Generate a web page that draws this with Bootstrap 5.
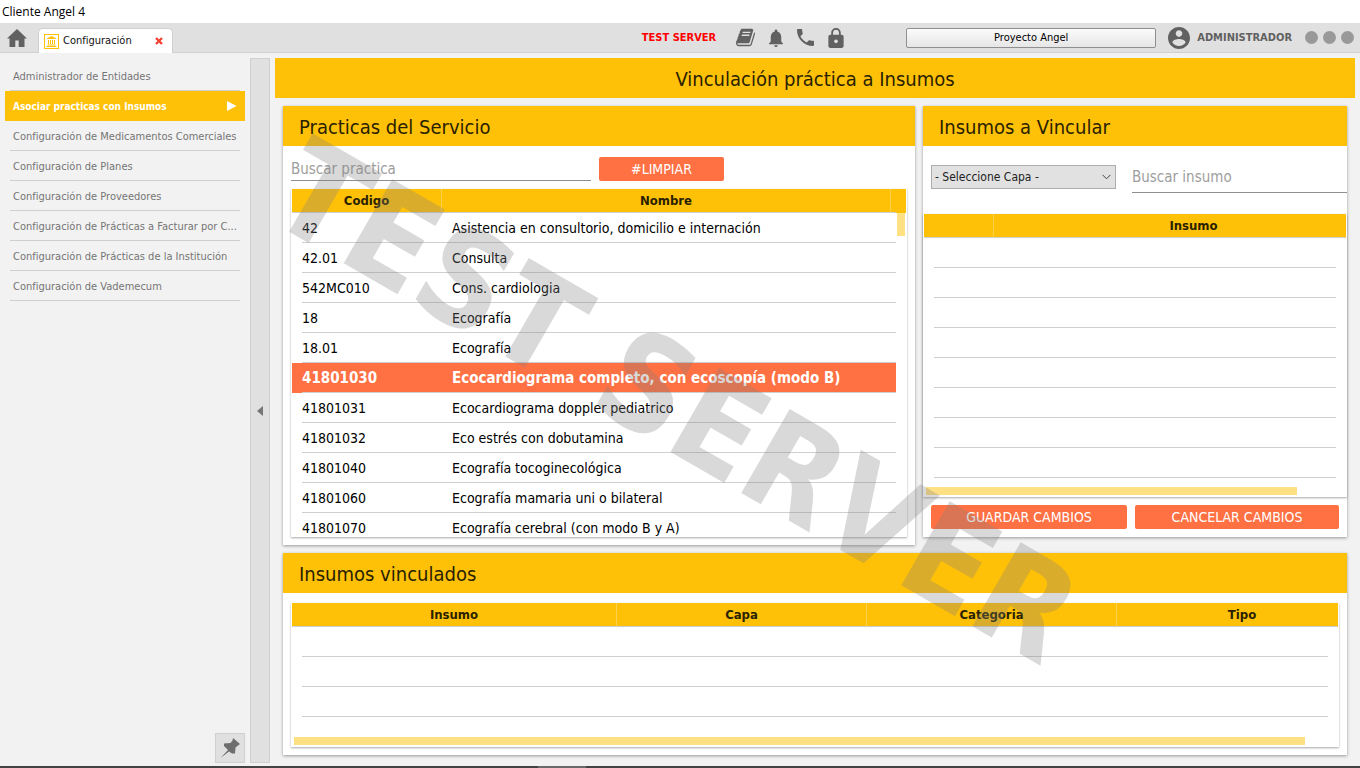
<!DOCTYPE html>
<html lang="es">
<head>
<meta charset="utf-8">
<meta name="viewport" content="width=device-width, initial-scale=1">
<title>Cliente Angel 4</title>
<link rel="stylesheet" href="https://cdn.jsdelivr.net/npm/bootstrap@5.3.0/dist/css/bootstrap.min.css">
<style>
:root{--ambar:#ffc107;--ambar-claro:#ffe082;--naranja:#ff7043;--fondo:#f2f2f2;--barra:#e0e0e0;--linea:#cfcfcf;--icono:#616161;}
body{font-family:"DejaVu Sans Condensed","DejaVu Sans",Tahoma,sans-serif;font-size:14px;line-height:20px;color:#000;background:var(--fondo);}
.app{min-height:100vh;}
.titulo-ventana{height:23px;padding-left:2px;font-family:"Open Sans","Segoe UI",sans-serif;font-size:12px;line-height:23px;}
.barra{height:30px;background:var(--barra);border-bottom:1px solid #d0d0d0;padding:0 6px 0 7px;font-size:11px;color:var(--icono);}
.barra svg{fill:currentColor;display:block;}
.icono-btn{border:0;padding:0;background:none;color:inherit;}
.herramientas{gap:14px;margin:0 62px 0 20px;}
.pestana{height:25px;width:135px;margin:5px 0 -1px 11px;padding:0 9px 0 5px;background:#fff;border:1px solid #d0d0d0;border-bottom:0;border-radius:5px 5px 0 0;color:#111;}
.aviso{color:#f00;}
.proyecto{width:250px;height:20px;border:1px solid #8f8f8f;border-radius:2px;background:linear-gradient(#fbfbfb,#e6e6e6);font-size:11px;line-height:18px;padding:0;color:#000;}
.usuario{gap:7px;margin:0 13px 0 12px;}
.puntos{gap:5px;}
.punto{width:13px;height:13px;border-radius:50%;background:#999;border:0;padding:0;}
.cuerpo{padding:5px 5px 3px;gap:5px;min-height:0;}
.lateral{width:240px;padding-top:3px;}
.lateral a{height:30px;line-height:31px;padding:0 8px;white-space:nowrap;font-size:11px;color:#757575;text-decoration:none;background:linear-gradient(var(--linea),var(--linea)) center bottom/calc(100% - 10px) 1px no-repeat;}
.lateral a.activo{background:var(--ambar);color:#fff;font-size:10px;font-weight:700;}
.fijar{width:30px;height:30px;padding:0;border:1px solid #d0d0d0;background:var(--barra);}
.divisor{width:20px;background:var(--barra);border:1px solid #d0d0d0;}
.principal{min-width:0;}
.cabecera{height:40px;line-height:42px;background:var(--ambar);color:#2a2100;font-size:20px;font-weight:400;margin:0;}
.zona{padding:8px;gap:8px;}
.paneles{display:grid;grid-template-columns:minmax(0,1fr) 424px;gap:8px;}
.panel{background:#fff;box-shadow:0 1px 3px rgba(0,0,0,.38);}
.panel .cabecera{padding:0 16px;}
.panel-datos{padding:10px 8px 8px;}
.marco{background:#fff;box-shadow:0 1px 2px rgba(0,0,0,.35);padding:0 1px 1px;}
.busqueda{padding-top:1px;}
.buscar{border:0;border-bottom:1px solid #8f8f8f;background:none;padding:0;height:24px;outline:0;font-size:15px;width:300px;}
.buscar::placeholder{color:#9e9e9e;opacity:1;}
.accion{height:24px;line-height:24px;padding:0;border:0;border-radius:2px;background:var(--naranja);color:#fff;font-size:14px;}
.limpiar{width:125px;}
.cancelar{width:204px;}
.capa{width:185px;height:24px;border:1px solid #adadad;border-radius:0;background:#e1e1e1 url("data:image/svg+xml,%3Csvg xmlns='http://www.w3.org/2000/svg' width='9' height='6'%3E%3Cpath d='M.5 .8l4 4 4-4' fill='none' stroke='%23444'/%3E%3C/svg%3E") right 4px center no-repeat;appearance:none;padding:0 3px;font-size:12px;color:#222;}
.filtros{padding:19px 0 21px 8px;}
.filtros .buscar{height:28px;padding-bottom:4px;min-width:0;width:auto;}
.grilla{width:100%;table-layout:fixed;border-collapse:separate;border-spacing:0;}
.grilla th{height:24px;line-height:24px;padding:0;background:var(--ambar);border-bottom:1px solid var(--linea);border-right:1px solid #ffd24d;text-align:center;font-size:13px;color:#2a2100;}
.grilla thead tr{height:24px;}
.grilla th{line-height:23px;}
.grilla th:last-child{border-right-color:var(--ambar);}
.grilla tbody tr{background:linear-gradient(var(--linea),var(--linea)) center bottom/calc(100% - 20px) 1px no-repeat;}
.grilla td{height:30px;line-height:30px;padding:0 10px;white-space:nowrap;overflow:hidden;}
.practicas tbody tr{background-position:right bottom;background-size:calc(100% - 10px) 1px;}
.practicas .elegida{background-color:var(--naranja);color:#fff;font-weight:700;font-size:15px;}
.lista{height:347px;overflow:hidden;}
.riel{width:10px;}
.riel-tope{height:24px;background:var(--ambar);}
.riel-pulgar{width:8px;height:23px;margin-left:1px;background:var(--ambar-claro);}
.pulgar{height:8px;margin:0 0 1px 2px;background:var(--ambar-claro);}
.insumos th:last-child{padding-left:48px;}
.insumos + .pulgar{width:88%;margin-top:9px;}
.vinculados th:last-child{padding-left:30px;}
.vinculados + .pulgar{width:1011px;max-width:97%;margin-top:20px;}
.borde-inferior{height:2px;background:linear-gradient(90deg,transparent 538px,#6a6a6a 538px,#6a6a6a 586px,transparent 586px),#434343;}
.marca{position:absolute;inset:36px 8px 0 0;overflow:hidden;pointer-events:none;}
.marca span{font-size:133px;line-height:1;font-weight:700;color:rgba(128,128,128,.3);transform:rotate(30deg);white-space:nowrap;}
</style>
</head>
<body>
<div class="app d-flex flex-column position-relative">
  <div class="titulo-ventana bg-white">Cliente Angel 4</div>

  <header class="barra d-flex align-items-center">
    <button class="icono-btn" aria-label="Inicio"><svg width="20" height="18" viewBox="0 0 20 18"><path d="M10 0 0 9.500h2.500V18h5.800v-6.500h3.400V18h5.800V9.500H20z"/></svg></button>
    <div class="pestana d-flex align-items-center align-self-start">
      <svg width="15" height="15" viewBox="0 0 15 15" class="flex-shrink-0 text-warning"><path d="M0 0h15v15H0zM1 1v13h13V1z" fill-rule="evenodd"/><path d="M7.500 2 3 4.200V5h9v-.8zM4 6h1v4H4zM6 6h1v4H6zM8 6h1v4H8zM10 6h1v4h-1zM3.500 10.500h8v1h-8zM2.500 12h10v1h-10z"/></svg>
      <span class="ms-1">Configuración</span>
      <button class="icono-btn ms-auto" aria-label="Cerrar"><svg width="8" height="8" viewBox="0 0 8 8"><path d="M1 1l6 6M7 1L1 7" stroke="#f44336" stroke-width="2.400"/></svg></button>
    </div>
    <strong class="aviso ms-auto">TEST SERVER</strong>
    <div class="herramientas d-flex align-items-center">
      <button class="icono-btn" aria-label="Manual"><svg width="19" height="19" viewBox="64 64 1664 1664"><path d="M1703 478q40 57 18 129l-275 906q-19 64-76.500 107.500t-122.500 43.500h-923q-77 0-148.500-53.500t-99.500-131.500q-24-67-2-127 0-4 3-27t4-37q1-8-3-21.500t-3-19.500q2-11 8-21t16.500-23.500 16.500-23.500q23-38 45-91.500t30-91.500q3-10 .5-30t-.5-28q3-11 17-28t17-23q21-36 42-92t25-90q1-9-2.500-32t.5-28q4-13 22-30.500t22-22.500q19-26 42.500-84.500t27.500-96.500q1-8-3-25.500t-2-26.500q2-8 9-18t18-23 17-21q8-12 16.500-30.500t15-35 16-36 19.500-32 26.500-23.500 36-11.500 47.500 5.500l-1 3q38-9 51-9h761q74 0 114 56t18 130l-274 906q-36 119-71.500 153.500t-128.500 34.500h-869q-27 0-38 15-11 16-1 43 24 70 144 70h923q29 0 56-15.500t35-41.500l300-987q7-22 5-57 38 15 59 43zm-1064 2q-4 13 2 22.500t20 9.500h608q13 0 25.500-9.500t16.500-22.500l21-64q4-13-2-22.500t-20-9.500h-608q-13 0-25.500 9.500t-16.500 22.500zm-83 256q-4 13 2 22.500t20 9.500h608q13 0 25.500-9.500t16.500-22.500l21-64q4-13-2-22.500t-20-9.500h-608q-13 0-25.500 9.500t-16.500 22.500z"/></svg></button>
      <button class="icono-btn" aria-label="Notificaciones"><svg width="14" height="18" viewBox="4 2 16 20" preserveAspectRatio="none"><path d="M12 22c1.100 0 2-.9 2-2h-4c0 1.100.89 2 2 2zm6-6v-5c0-3.070-1.640-5.640-4.500-6.320V4c0-.83-.67-1.500-1.500-1.500s-1.500.67-1.500 1.500v.68C7.630 5.360 6 7.920 6 11v5l-2 2v1h16v-1z"/></svg></button>
      <button class="icono-btn" aria-label="Llamadas"><svg width="17" height="17" viewBox="3 3 18 18"><path d="M6.620 10.790c1.440 2.830 3.760 5.140 6.590 6.590l2.200-2.200c.27-.27.67-.36 1.020-.24 1.120.37 2.330.57 3.570.57.55 0 1 .45 1 1V20c0 .55-.45 1-1 1-9.390 0-17-7.610-17-17 0-.55.45-1 1-1h3.500c.55 0 1 .45 1 1 0 1.250.2 2.450.57 3.570.11.35.03.74-.25 1.020z"/></svg></button>
      <button class="icono-btn" aria-label="Bloquear"><svg width="16" height="20" viewBox="4 1 16 21"><path d="M18 8h-1V6c0-2.760-2.240-5-5-5S7 3.240 7 6v2H6c-1.100 0-2 .9-2 2v10c0 1.100.9 2 2 2h12c1.100 0 2-.9 2-2V10c0-1.100-.9-2-2-2zm-6 9c-1.100 0-2-.9-2-2s.9-2 2-2 2 .9 2 2-.9 2-2 2zm3.100-9H8.900V6c0-1.710 1.390-3.100 3.100-3.100s3.100 1.390 3.100 3.100z"/></svg></button>
    </div>
    <button class="proyecto">Proyecto Angel</button>
    <div class="usuario d-flex align-items-center">
      <svg class="flex-shrink-0" width="22" height="22" viewBox="2 2 20 20"><path d="M12 2C6.480 2 2 6.480 2 12s4.480 10 10 10 10-4.480 10-10S17.520 2 12 2zm0 3c1.660 0 3 1.340 3 3s-1.340 3-3 3-3-1.340-3-3 1.340-3 3-3zm0 14.200c-2.500 0-4.710-1.280-6-3.220.03-1.990 4-3.080 6-3.080 1.990 0 5.970 1.090 6 3.080-1.290 1.940-3.500 3.220-6 3.220z"/></svg>
      <strong>ADMINISTRADOR</strong>
    </div>
    <div class="puntos d-flex">
      <button class="punto" aria-label="Minimizar"></button>
      <button class="punto" aria-label="Restaurar"></button>
      <button class="punto" aria-label="Salir"></button>
    </div>
  </header>

  <div class="cuerpo d-flex flex-grow-1">
    <nav class="lateral d-flex flex-column flex-shrink-0" aria-label="Configuración">
      <a href="#">Administrador de Entidades</a>
      <a href="#" class="activo d-flex align-items-center justify-content-between" aria-current="page">Asociar practicas con Insumos<svg width="10" height="10" viewBox="0 0 10 10"><path d="M0 0l9.500 5L0 10z" fill="#fff"/></svg></a>
      <a href="#">Configuración de Medicamentos Comerciales</a>
      <a href="#">Configuración de Planes</a>
      <a href="#">Configuración de Proveedores</a>
      <a href="#">Configuración de Prácticas a Facturar por C...</a>
      <a href="#">Configuración de Prácticas de la Institución</a>
      <a href="#">Configuración de Vademecum</a>
      <button class="fijar mt-auto align-self-end" aria-label="Fijar menú"><svg class="d-block" width="28" height="28" viewBox="1 1 28 28"><path d="M18 5l7 6-2 1.500-2.500 2-.5 6-3 0-3-2-8.500 6.500L13 17l-4-4v-2.500l6.500-.5 2-2.500z" fill="#6e6e6e"/></svg></button>
    </nav>

    <div class="divisor flex-shrink-0 d-flex align-items-center justify-content-center"><svg width="6" height="10" viewBox="0 0 6 10"><path d="M6 0v10L0 5z" fill="#757575"/></svg></div>

    <main class="principal flex-grow-1 d-flex flex-column">
      <h1 class="cabecera text-center">Vinculación práctica a Insumos</h1>
      <div class="zona d-flex flex-column">
        <div class="paneles align-items-start">
          <section class="panel">
            <h2 class="cabecera">Practicas del Servicio</h2>
            <div class="panel-datos">
              <div class="busqueda d-flex gap-2 mb-2">
                <input class="buscar" type="text" placeholder="Buscar practica" aria-label="Buscar practica">
                <button class="accion limpiar">#LIMPIAR</button>
              </div>
              <div class="marco">
                <div class="lista d-flex">
                  <div class="flex-grow-1">
                    <table class="grilla practicas">
                      <colgroup><col style="width:150px"><col><col style="width:5px"></colgroup>
                      <thead><tr><th>Codigo</th><th>Nombre</th><th></th></tr></thead>
                      <tbody>
                        <tr><td>42</td><td colspan="2">Asistencia en consultorio, domicilio e internación</td></tr>
                        <tr><td>42.01</td><td colspan="2">Consulta</td></tr>
                        <tr><td>542MC010</td><td colspan="2">Cons. cardiologia</td></tr>
                        <tr><td>18</td><td colspan="2">Ecografía</td></tr>
                        <tr><td>18.01</td><td colspan="2">Ecografía</td></tr>
                        <tr class="elegida"><td>41801030</td><td colspan="2">Ecocardiograma completo, con ecoscopía (modo B)</td></tr>
                        <tr><td>41801031</td><td colspan="2">Ecocardiograma doppler pediatrico</td></tr>
                        <tr><td>41801032</td><td colspan="2">Eco estrés con dobutamina</td></tr>
                        <tr><td>41801040</td><td colspan="2">Ecografía tocoginecológica</td></tr>
                        <tr><td>41801060</td><td colspan="2">Ecografía mamaria uni o bilateral</td></tr>
                        <tr><td>41801070</td><td colspan="2">Ecografía cerebral (con modo B y A)</td></tr>
                      </tbody>
                    </table>
                  </div>
                  <div class="riel flex-shrink-0"><div class="riel-tope"></div><div class="riel-pulgar"></div></div>
                </div>
              </div>
            </div>
          </section>

          <section class="panel">
            <h2 class="cabecera">Insumos a Vincular</h2>
            <div class="filtros d-flex gap-3">
              <select class="capa" aria-label="Capa"><option>- Seleccione Capa -</option></select>
              <input class="buscar flex-grow-1" type="text" placeholder="Buscar insumo" aria-label="Buscar insumo">
            </div>
            <div class="marco">
              <table class="grilla insumos">
                <colgroup><col style="width:70px"><col></colgroup>
                <thead><tr><th></th><th>Insumo</th></tr></thead>
                <tbody>
                  <tr><td></td><td></td></tr><tr><td></td><td></td></tr><tr><td></td><td></td></tr><tr><td></td><td></td></tr>
                  <tr><td></td><td></td></tr><tr><td></td><td></td></tr><tr><td></td><td></td></tr><tr><td></td><td></td></tr>
                </tbody>
              </table>
              <div class="pulgar"></div>
            </div>
            <div class="d-flex gap-2 p-2">
              <button class="accion flex-grow-1">GUARDAR CAMBIOS</button>
              <button class="accion cancelar">CANCELAR CAMBIOS</button>
            </div>
          </section>
        </div>

        <section class="panel">
          <h2 class="cabecera">Insumos vinculados</h2>
          <div class="panel-datos">
            <div class="marco">
              <table class="grilla vinculados">
                <colgroup><col style="width:325px"><col style="width:250px"><col style="width:250px"><col></colgroup>
                <thead><tr><th>Insumo</th><th>Capa</th><th>Categoria</th><th>Tipo</th></tr></thead>
                <tbody>
                  <tr><td></td><td></td><td></td><td></td></tr>
                  <tr><td></td><td></td><td></td><td></td></tr>
                  <tr><td></td><td></td><td></td><td></td></tr>
                </tbody>
              </table>
              <div class="pulgar"></div>
            </div>
          </div>
        </section>
      </div>
    </main>
  </div>
  <div class="borde-inferior"></div>
  <div class="marca d-flex align-items-center justify-content-center" aria-hidden="true"><span>TEST SERVER</span></div>
</div>
<script src="https://cdn.jsdelivr.net/npm/bootstrap@5.3.0/dist/js/bootstrap.bundle.min.js"></script>
</body>
</html>
